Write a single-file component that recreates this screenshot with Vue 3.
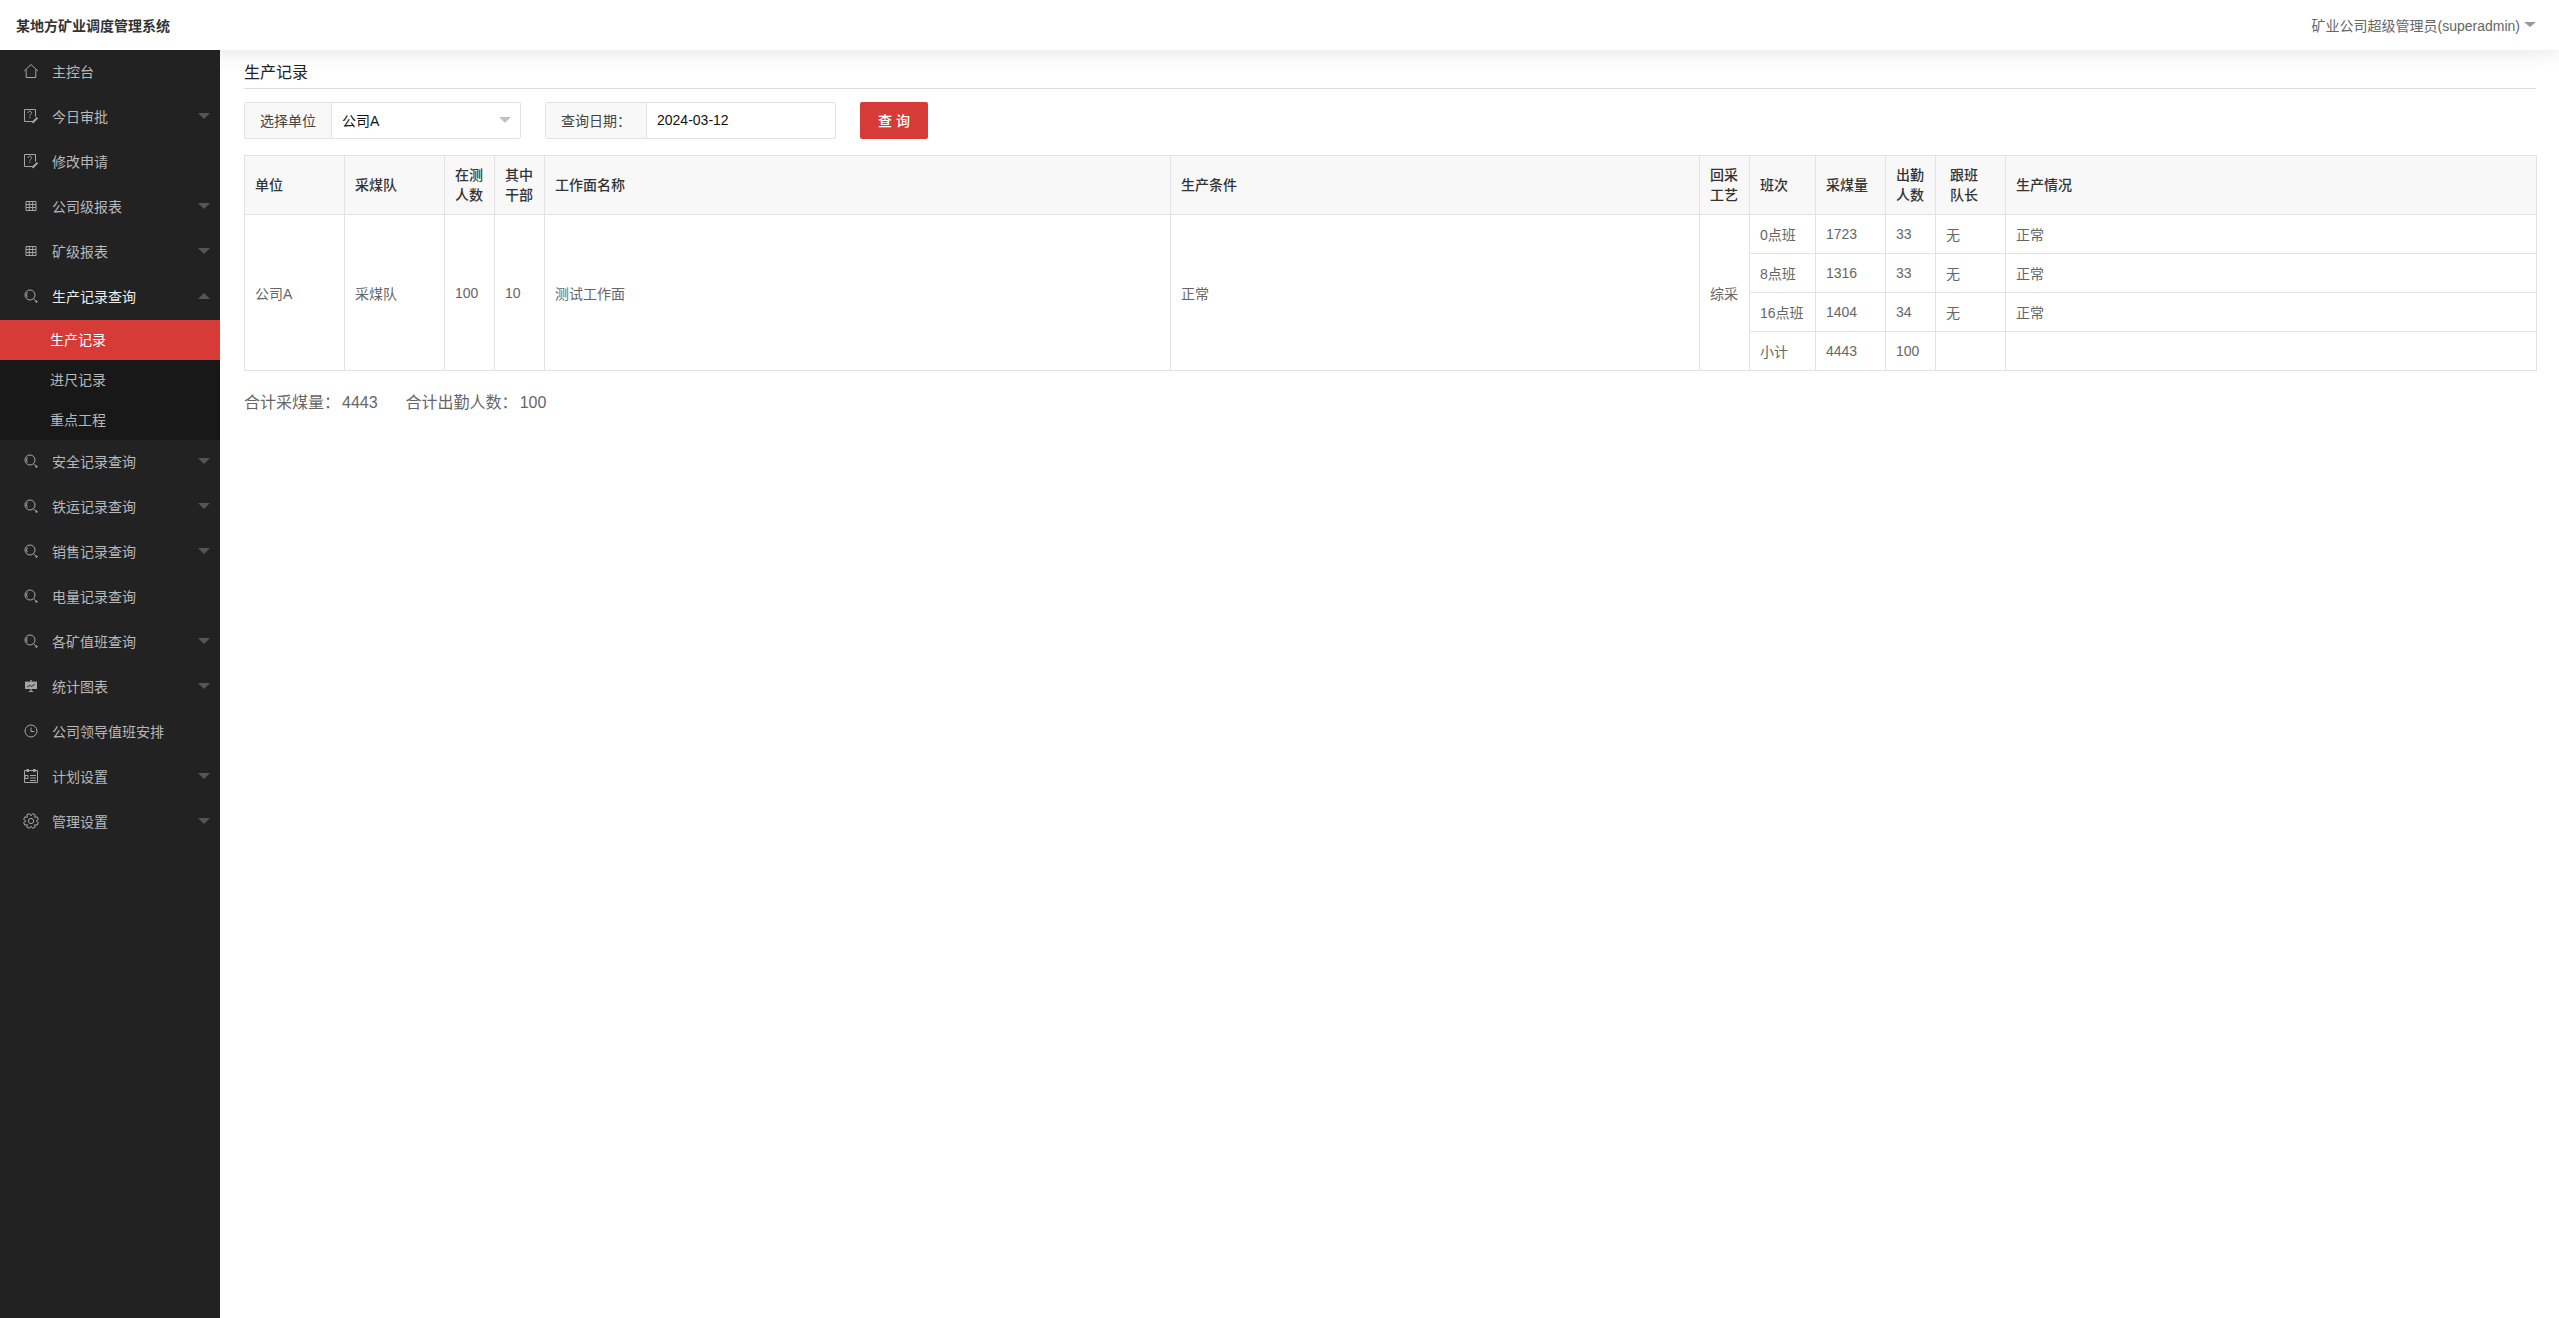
<script setup>
function gear() {
  const pts = []
  const n = 8
  for (let i = 0; i < n; i++) {
    const a = (i / n) * Math.PI * 2 + Math.PI / 8
    const step = (Math.PI * 2) / n
    const radii = [[-0.5, 5.2], [-0.24, 7.5], [0.24, 7.5], [0.5, 5.2]]
    for (const [o, r] of radii) {
      const t = a + o * step
      pts.push(`${(8 + r * Math.cos(t)).toFixed(2)} ${(8 + r * Math.sin(t)).toFixed(2)}`)
    }
  }
  return 'M' + pts.join('L') + 'Z'
}

const icons = {
  home: { line: ['M1.2 8 8 1.5 14.8 8', 'M3.2 6.6v7.9h9.6V6.6'] },
  edit: {
    line: [
      'M10 13.5H1.5V1.5h11v7',
      'M5 5c0-2.4 3.6-2.4 3.6-.2 0 1.4-1.8 1.4-1.8 3',
      'M6.8 8.8v1.2'
    ],
    heavy: ['M9.5 14.8l5-5.2']
  },
  table: {
    line: ['M3 3.5h10v9H3z', 'M3 6.5h10', 'M3 9.5h10', 'M6.3 3.5v9', 'M9.7 3.5v9']
  },
  search: {
    line: ['M7 2a5 5 0 1 0 0 10a5 5 0 1 0 0-10z', 'M4.4 4.6a3.5 3.5 0 0 0 0 4.6', 'M10.6 10.8l2.2 2.2'],
    heavy: ['M12.8 13l1.4 1.4']
  },
  chart: {
    fill: ['M2 3.6h12V11H2z', 'M7.4 11h1.2v2.2H7.4z', 'M5.6 13h4.8v.9H5.6z', 'M7 2.2h2v1.4H7z'],
    dark: ['M4.2 9 6.6 7.4 8.6 8.4 11.8 6']
  },
  clock: { line: ['M8 2a6 6 0 1 0 0 12a6 6 0 1 0 0-12z', 'M8 4.6v3.9h3.2'] },
  plan: {
    line: ['M1.5 2.5h13v12h-13z', 'M7 7.5h6', 'M7 10h6', 'M7 12.5h6', 'M2 7.5h3v3H2z'],
    fill: ['M3.5 1h2.5v3H3.5z', 'M10 1h2.5v3H10z']
  },
  gear: { line: [gear(), 'M8 5.4a2.6 2.6 0 1 0 0 5.2a2.6 2.6 0 1 0 0-5.2z'] }
}

const menu = [
  { name: '主控台', icon: 'home' },
  { name: '今日审批', icon: 'edit', arrow: true },
  { name: '修改申请', icon: 'edit' },
  { name: '公司级报表', icon: 'table', arrow: true },
  { name: '矿级报表', icon: 'table', arrow: true },
  {
    name: '生产记录查询',
    icon: 'search',
    arrow: true,
    open: true,
    children: [
      { name: '生产记录', active: true },
      { name: '进尺记录' },
      { name: '重点工程' }
    ]
  },
  { name: '安全记录查询', icon: 'search', arrow: true },
  { name: '铁运记录查询', icon: 'search', arrow: true },
  { name: '销售记录查询', icon: 'search', arrow: true },
  { name: '电量记录查询', icon: 'search' },
  { name: '各矿值班查询', icon: 'search', arrow: true },
  { name: '统计图表', icon: 'chart', arrow: true },
  { name: '公司领导值班安排', icon: 'clock' },
  { name: '计划设置', icon: 'plan', arrow: true },
  { name: '管理设置', icon: 'gear', arrow: true }
]

const columns = [100, 100, 50, 50, 626, 529, 50, 66, 70, 50, 70, 531]
const heads = [
  ['单位'], ['采煤队'], ['在测', '人数'], ['其中', '干部'], ['工作面名称'], ['生产条件'],
  ['回采', '工艺'], ['班次'], ['采煤量'], ['出勤', '人数'], ['跟班', '队长'], ['生产情况']
]
const shifts = [
  ['0点班', '1723', '33', '无', '正常'],
  ['8点班', '1316', '33', '无', '正常'],
  ['16点班', '1404', '34', '无', '正常'],
  ['小计', '4443', '100', '', '']
]
const lead = ['公司A', '采煤队', '100', '10', '测试工作面', '正常', '综采']
</script>

<template>
  <div class="page">
    <header class="topbar">
      <div class="brand">某地方矿业调度管理系统</div>
      <div class="user">
        <span>矿业公司超级管理员(superadmin)</span>
        <i class="user-caret"></i>
      </div>
    </header>
    <div class="body">
      <aside class="sidebar">
        <template v-for="item in menu" :key="item.name">
          <div class="menu-item" :class="{ open: item.open }">
            <svg class="icon" viewBox="0 0 16 16" width="16" height="16">
              <path v-for="d in icons[item.icon].fill || []" :key="d" :d="d" class="i-fill" />
              <path v-for="d in icons[item.icon].line || []" :key="d" :d="d" class="i-line" />
              <path v-for="d in icons[item.icon].heavy || []" :key="d" :d="d" class="i-heavy" />
              <path v-for="d in icons[item.icon].dark || []" :key="d" :d="d" class="i-dark" />
            </svg>
            <span class="menu-label">{{ item.name }}</span>
            <i v-if="item.arrow" class="caret" :class="{ up: item.open }"></i>
          </div>
          <div v-if="item.children" class="submenu">
            <div
              v-for="child in item.children"
              :key="child.name"
              class="sub-item"
              :class="{ active: child.active }"
            >{{ child.name }}</div>
          </div>
        </template>
      </aside>
      <main class="content">
        <h1 class="title">生产记录</h1>
        <div class="filters">
          <div class="group group-unit">
            <div class="addon addon-unit">选择单位</div>
            <div class="select">
              <span>公司A</span>
              <i class="select-caret"></i>
            </div>
          </div>
          <div class="group group-date">
            <div class="addon addon-date">查询日期&#xFF1A;</div>
            <div class="date">2024-03-12</div>
          </div>
          <button class="search-btn" type="button">查 询</button>
        </div>
        <table class="grid">
          <colgroup>
            <col v-for="(w, i) in columns" :key="i" :style="{ width: w + 'px' }" />
          </colgroup>
          <thead>
            <tr>
              <th v-for="(h, i) in heads" :key="i" :class="{ shifted: i === 10 }">
                <div v-for="line in h" :key="line">{{ line }}</div>
              </th>
            </tr>
          </thead>
          <tbody>
            <tr v-for="(row, r) in shifts" :key="r">
              <template v-if="r === 0">
                <td v-for="(v, i) in lead" :key="i" rowspan="4">{{ v }}</td>
              </template>
              <td v-for="(v, i) in row" :key="i">{{ v }}</td>
            </tr>
          </tbody>
        </table>
        <div class="totals">
          <span>合计采煤量&#xFF1A;<span class="num">4443</span></span>
          <span>合计出勤人数&#xFF1A;<span class="num">100</span></span>
        </div>
      </main>
    </div>
  </div>
</template>

<style>
html, body { margin: 0; padding: 0; background: #fff; }
</style>

<style scoped>
.page {
  height: 100vh;
  min-height: 1318px;
  display: flex;
  flex-direction: column;
  font-family: "Liberation Sans", "Noto Sans CJK SC", sans-serif;
  font-size: 14px;
  color: #666;
  overflow: hidden;
}
.topbar {
  height: 50px;
  flex: none;
  display: flex;
  align-items: center;
  justify-content: space-between;
  padding: 0 23px 0 16px;
  background: #fff;
  box-shadow: 0 0 24px rgba(0, 0, 0, 0.12);
  position: relative;
}
.brand { font-weight: 700; color: #333; margin-top: -1px; }
.user { display: flex; align-items: center; gap: 4px; color: #666; margin-top: -1px; }
.user-caret {
  width: 0; height: 0;
  border-left: 6px solid transparent;
  border-right: 6px solid transparent;
  border-top: 5px solid #999;
}
.body { flex: 1; display: flex; min-height: 0; }
.sidebar {
  width: 220px;
  flex: none;
  background: #222;
  position: relative;
  color: #b8b8b8;
}
.menu-item {
  height: 45px;
  display: flex;
  align-items: center;
  padding: 0 10px 3px 23px;
  box-sizing: border-box;
}
.menu-item.open { color: #eee; }
.icon { width: 16px; height: 16px; flex: none; }
.i-line { fill: none; stroke: #a6a6a6; stroke-width: 1; }
.i-heavy { fill: none; stroke: #a6a6a6; stroke-width: 2; }
.i-fill { fill: #a6a6a6; stroke: none; }
.i-dark { fill: none; stroke: #222; stroke-width: 1; }
.menu-label { margin-left: 13px; flex: 1; }
.caret {
  width: 0; height: 0;
  border-left: 6px solid transparent;
  border-right: 6px solid transparent;
  border-top: 6px solid #555;
}
.caret.up { border-top: 0; border-bottom: 6px solid #555; }
.submenu { background: #181818; }
.sub-item {
  height: 40px;
  line-height: 40px;
  padding-left: 50px;
  color: #b8b8b8;
}
.sub-item.active { background: #d63b37; color: #fff; }
.content { flex: 1; padding: 0 23px 0 24px; min-width: 0; }
.title {
  margin: 0;
  height: 38px;
  line-height: 46px;
  font-size: 16px;
  font-weight: 400;
  color: #222;
  border-bottom: 1px solid #ddd;
}
.filters { display: flex; margin-top: 13px; height: 37px; }
.group {
  display: flex;
  border: 1px solid #e2e2e2;
  border-radius: 2px;
  box-sizing: border-box;
  height: 37px;
}
.group-unit { width: 277px; }
.group-date { width: 291px; margin-left: 24px; }
.addon {
  background: #f8f8f8;
  border-right: 1px solid #e2e2e2;
  display: flex;
  align-items: center;
  justify-content: center;
  color: #444;
  flex: none;
  box-sizing: border-box;
  padding-bottom: 2px;
}
.addon-unit { width: 87px; }
.addon-date { width: 101px; }
.select, .date {
  flex: 1;
  display: flex;
  align-items: center;
  padding-left: 10px;
  padding-bottom: 2px;
  color: #111;
}
.select { justify-content: space-between; padding-right: 9px; }
.select-caret {
  width: 0; height: 0;
  border-left: 6px solid transparent;
  border-right: 6px solid transparent;
  border-top: 6px solid #c2c2c2;
}
.search-btn {
  margin-left: 24px;
  width: 68px;
  height: 37px;
  border: 0;
  border-radius: 2px;
  background: #d63b37;
  color: #fff;
  font: inherit;
  font-weight: 500;
  padding: 0 0 2px;
}
.grid {
  margin-top: 16px;
  width: 2292px;
  border-collapse: collapse;
  table-layout: fixed;
  font-size: 14px;
}
.grid th, .grid td {
  border: 1px solid #e2e2e2;
  padding: 0 10px;
  text-align: left;
  color: #666;
  font-weight: 400;
}
.grid th {
  height: 58px;
  background: #f8f8f8;
  color: #333;
  font-weight: 500;
  line-height: 20px;
}
.grid th.shifted { padding-left: 14px; }
.grid td { height: 38px; }
.totals {
  margin-top: 20px;
  font-size: 16px;
  color: #666;
  display: flex;
  gap: 28px;
  line-height: 24px;
}
.num { margin-left: 2px; }
</style>
